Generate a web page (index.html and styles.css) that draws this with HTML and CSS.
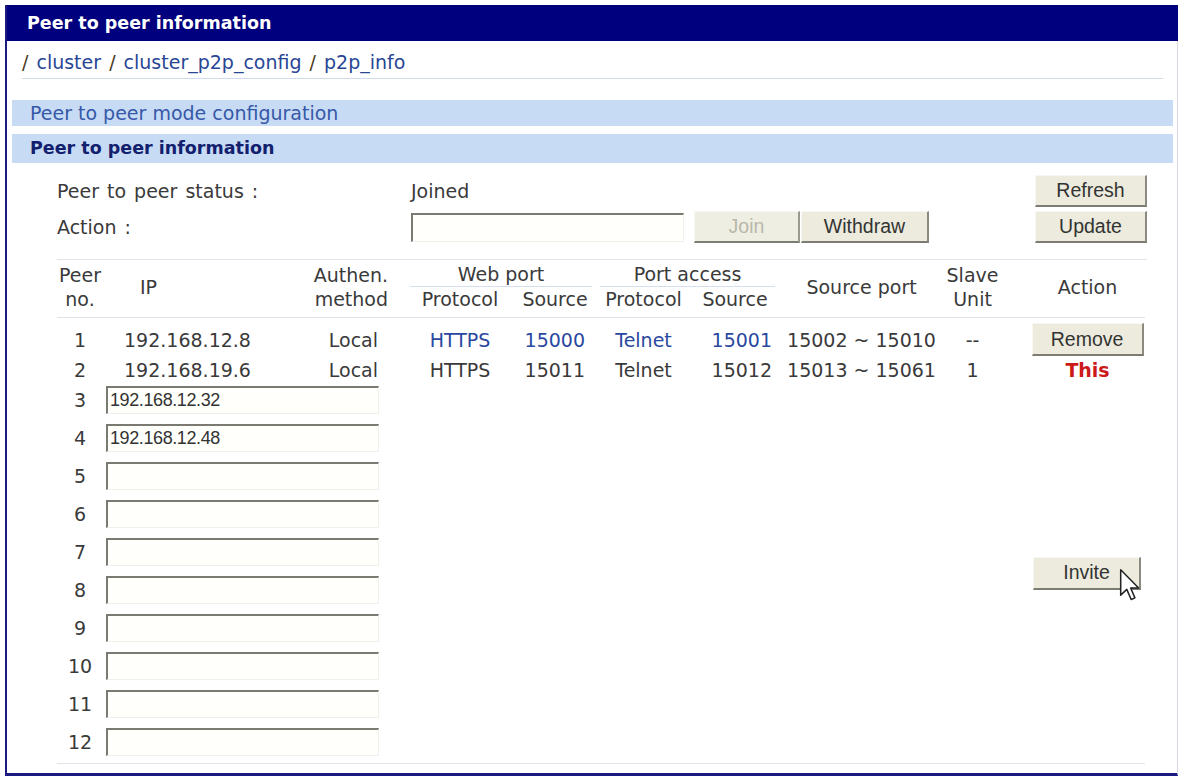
FILE: index.html
```html
<!DOCTYPE html>
<html>
  <head>
    <title>Peer to peer information</title>
    <link rel="stylesheet" href="styles.css">
  </head>
<body>

<div class="panel">
  <div class="title">Peer to peer information</div>

  <div class="crumb">
    <span class="sep">/</span> <a href="#">cluster</a> <span class="sep">/</span> <a href="#">cluster_p2p_config</a> <span class="sep">/</span> <a href="#">p2p_info</a>
  </div>

  <div class="bar bar-link">Peer to peer mode configuration</div>
  <div class="bar bar-active">Peer to peer information</div>

  <div class="content">
    <div class="status">
      <div class="lbl">Peer to peer status :</div>
      <div class="val">Joined</div>
      <button class="btn btn-side">Refresh</button>

      <div class="lbl">Action :</div>
      <div class="val actions">
        <input type="text" class="field field-action">
        <button class="btn btn-join" disabled>Join</button>
        <button class="btn btn-withdraw">Withdraw</button>
      </div>
      <button class="btn btn-side">Update</button>
    </div>

    <table class="peers">
      <colgroup>
        <col style="width:48px">
        <col style="width:185px">
        <col style="width:115px">
        <col style="width:110px">
        <col style="width:80px">
        <col style="width:97px">
        <col style="width:86px">
        <col style="width:167px">
        <col style="width:55px">
        <col style="width:145px">
      </colgroup>
      <tr class="head1">
        <th rowspan="2" class="c-no">Peer<br>no.</th>
        <th rowspan="2" class="c-iph">IP</th>
        <th class="c-auth">Authen.</th>
        <th colspan="2"><div class="group">Web port</div></th>
        <th colspan="2"><div class="group">Port access</div></th>
        <th rowspan="2">Source port</th>
        <th class="c-slave">Slave</th>
        <th rowspan="2" class="c-act">Action</th>
      </tr>
      <tr class="head2">
        <th class="c-auth">method</th>
        <th>Protocol</th>
        <th class="c-src">Source</th>
        <th>Protocol</th>
        <th class="c-src2">Source</th>
        <th class="c-slave">Unit</th>
      </tr>

      <tr class="row-first">
        <td class="c-no">1</td>
        <td class="c-ip">192.168.12.8</td>
        <td class="c-authv">Local</td>
        <td class="link">HTTPS</td>
        <td class="link c-srcv">15000</td>
        <td class="link">Telnet</td>
        <td class="link c-srcv2">15001</td>
        <td>15002 ~ 15010</td>
        <td class="c-slave">--</td>
        <td class="c-act"><button class="btn btn-row">Remove</button></td>
      </tr>
      <tr class="row-second">
        <td class="c-no">2</td>
        <td class="c-ip">192.168.19.6</td>
        <td class="c-authv">Local</td>
        <td>HTTPS</td>
        <td class="c-srcv">15011</td>
        <td>Telnet</td>
        <td class="c-srcv2">15012</td>
        <td>15013 ~ 15061</td>
        <td class="c-slave">1</td>
        <td class="c-act this">This</td>
      </tr>

      <tr class="row-input">
        <td class="c-no">3</td>
        <td colspan="2" class="c-field"><input type="text" class="field field-ip" value="192.168.12.32"></td>
        <td colspan="6"></td>
        <td rowspan="10" class="c-act invite-cell">
          <div class="invite-wrap">
            <button class="btn btn-row">Invite</button>
            <svg class="cursor" width="22" height="34" viewBox="0 0 13 20">
              <path d="M1 1 L1 16 L4.6 12.6 L7.2 18.6 L9.4 17.6 L6.9 11.8 L11.6 11.8 Z" fill="#fff" stroke="#222" stroke-width="0.9" stroke-linejoin="round"/>
            </svg>
          </div>
        </td>
      </tr>
      <tr class="row-input"><td class="c-no">4</td><td colspan="2" class="c-field"><input type="text" class="field field-ip" value="192.168.12.48"></td><td colspan="6"></td></tr>
      <tr class="row-input"><td class="c-no">5</td><td colspan="2" class="c-field"><input type="text" class="field field-ip"></td><td colspan="6"></td></tr>
      <tr class="row-input"><td class="c-no">6</td><td colspan="2" class="c-field"><input type="text" class="field field-ip"></td><td colspan="6"></td></tr>
      <tr class="row-input"><td class="c-no">7</td><td colspan="2" class="c-field"><input type="text" class="field field-ip"></td><td colspan="6"></td></tr>
      <tr class="row-input"><td class="c-no">8</td><td colspan="2" class="c-field"><input type="text" class="field field-ip"></td><td colspan="6"></td></tr>
      <tr class="row-input"><td class="c-no">9</td><td colspan="2" class="c-field"><input type="text" class="field field-ip"></td><td colspan="6"></td></tr>
      <tr class="row-input"><td class="c-no">10</td><td colspan="2" class="c-field"><input type="text" class="field field-ip"></td><td colspan="6"></td></tr>
      <tr class="row-input"><td class="c-no">11</td><td colspan="2" class="c-field"><input type="text" class="field field-ip"></td><td colspan="6"></td></tr>
      <tr class="row-input"><td class="c-no">12</td><td colspan="2" class="c-field"><input type="text" class="field field-ip"></td><td colspan="6"></td></tr>
    </table>
  </div>
</div>

</body></html>
```

FILE: styles.css
```css
/* Pagina general */
body {
  margin: 0;
  background-color: #ffffff;
  font-family: "DejaVu Sans", Verdana, sans-serif;
  font-size: 19px;
  color: #3a3a3a;
}

.panel {
  margin: 5px 4px 0 5px;
  height: 771px;
  box-sizing: border-box;
  border-left: 2px solid #1a1a80;
  border-bottom: 3px solid #1a1a80;
  border-right: 1px solid #d8d8e0;
}

/* Barra de titulo */
.title {
  background-color: #00007e;
  color: #ffffff;
  font-weight: bold;
  font-size: 17.5px;
  height: 36px;
  line-height: 36px;
  padding-left: 20px;
  margin-right: -1px;
}

.crumb {
  margin: 9px 14px 0 15px;
  padding-bottom: 4px;
  border-bottom: 1px solid #cfdaea;
  font-size: 19px;
  line-height: 24px;
  word-spacing: 2px;
}

.crumb a {
  color: #284694;
  text-decoration: none;
}

.crumb .sep {
  color: #4a3a20;
}

/* Barras de seccion */
.bar {
  background-color: #c8dbf4;
  margin: 0 4px 0 5px;
  padding-left: 18px;
  font-size: 17.5px;
}

.bar-link {
  margin-top: 21px;
  height: 26px;
  line-height: 26px;
  color: #3658a8;
  font-size: 19px;
}

.bar-active {
  margin-top: 8px;
  height: 29px;
  line-height: 29px;
  color: #12206e;
  font-weight: bold;
}

.content {
  padding: 12px 30px 0 50px;
}

/* Estado y acciones */
.status {
  display: grid;
  grid-template-columns: 354px 1fr 112px;
  row-gap: 4px;
  align-items: center;
  padding-bottom: 16px;
  border-bottom: 1px solid #dfe3ea;
}

.lbl {
  word-spacing: 2px;
}

.actions {
  display: flex;
  align-items: center;
}

.btn {
  font-family: "Liberation Sans", Arial, sans-serif;
  font-size: 19.5px;
  color: #333333;
  background-color: #ecebdd;
  border-style: solid;
  border-width: 1px 2px 2px 1px;
  border-color: #f8f8f2 #8a8a80 #7c7c72 #f8f8f2;
  padding: 0;
  height: 32px;
  cursor: pointer;
}

.btn-side {
  width: 112px;
}

.btn-join {
  width: 106px;
  margin-left: 10px;
  color: #b8b8aa;
  background-color: #efeee3;
  border-right-color: #9a9a90;
  cursor: default;
}

.btn-withdraw {
  width: 128px;
  margin-left: 1px;
}

.field {
  box-sizing: border-box;
  border-style: solid;
  border-width: 2px 1px 1px 2px;
  border-color: #7a7a72 #f0f0ec #f0f0ec #7a7a72;
  background-color: #fffffb;
  font-family: "Liberation Sans", Arial, sans-serif;
  font-size: 18px;
  color: #333333;
  padding: 0 2px;
  outline: none;
}

.field-action {
  width: 273px;
  height: 29px;
}

.field-ip {
  width: 273px;
  height: 28px;
  letter-spacing: -0.4px;
}

/* Tabla de pares */
.peers {
  table-layout: fixed;
  border-collapse: collapse;
  width: 1088px;
  border-bottom: 1px solid #dfe3ea;
}

.peers th {
  font-weight: normal;
  text-align: center;
  padding: 0;
  line-height: 24px;
}

.head1 th {
  padding-top: 3px;
}

.head2 th {
  padding-bottom: 6px;
  border-bottom: 1px solid #dfe3ea;
}

.head1 th[rowspan] {
  border-bottom: 1px solid #dfe3ea;
  padding-bottom: 6px;
}

.group {
  margin: 0 3px 0 5px;
  border-bottom: 1px solid #d6dff0;
  line-height: 22px;
  padding-bottom: 1px;
}

.peers td {
  text-align: center;
  padding: 0;
  white-space: nowrap;
}

.peers .c-iph {
  padding-right: 98px;
}

.peers .c-ip {
  padding-right: 20px;
}

.peers .c-auth {
  text-align: right;
  padding-right: 17px;
}

.peers .c-authv {
  text-align: right;
  padding-right: 27px;
}

.peers .c-srcv {
  text-align: right;
  padding-right: 10px;
}

.peers .c-srcv2 {
  text-align: right;
  padding-right: 6px;
}

.peers .c-act {
  padding-left: 30px;
}

.link {
  color: #2a48a0;
}

.this {
  color: #cc1a1a;
  font-weight: bold;
}

.row-first td {
  height: 37px;
  padding-top: 5px;
  box-sizing: border-box;
}

.btn-row {
  width: 112px;
  height: 33px;
}

.row-second td {
  height: 27px;
}

.row-input td {
  height: 38px;
  padding: 3px 0 7px;
  box-sizing: border-box;
}

.peers .c-no {
  text-align: center;
  padding-left: 0;
  padding-right: 2px;
}

.peers .c-field {
  text-align: left;
  padding-left: 1px;
}

.peers .invite-cell {
  vertical-align: middle;
  padding: 0 0 0 33px;
}

.invite-wrap {
  position: relative;
  width: 108px;
}

.invite-wrap .btn-row {
  width: 108px;
}

.cursor {
  position: absolute;
  left: 86px;
  top: 11px;
}
```
